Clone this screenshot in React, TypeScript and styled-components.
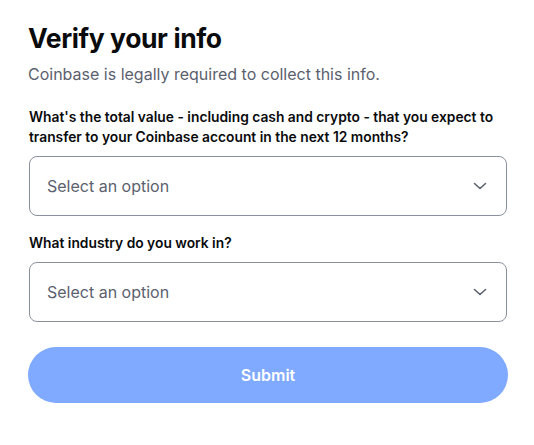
import React from "react";
import styled, { createGlobalStyle } from "styled-components";

const Global = createGlobalStyle`
  html, body { margin: 0; padding: 0; background: #ffffff; }
  body { font-family: Inter, "Noto Sans", sans-serif; color: #0a0b0d; }
  * { box-sizing: border-box; }
`;

const Page = styled.main`
  width: 534px;
  padding: 22px 27px 0 29px;
  display: flex;
  flex-direction: column;
`;

const Title = styled.h1`
  margin: 0 0 0 -1px;
  font-size: 26.5px;
  line-height: 32px;
  font-weight: 700;
  letter-spacing: -0.4px;
`;

const Subtitle = styled.p`
  margin: 8px 0 0 -1px;
  font-size: 16px;
  line-height: 24px;
  color: #5b616e;
`;

const Field = styled.div`
  display: flex;
  flex-direction: column;
  margin-top: ${(p: { $top: number }) => p.$top}px;
`;

const Label = styled.label`
  font-size: 13.8px;
  line-height: 20px;
  font-weight: 600;
  margin-bottom: 9px;
`;

const SelectBox = styled.div`
  height: 60px;
  border: 1px solid #8a919e;
  border-radius: 8px;
  display: flex;
  align-items: center;
  justify-content: space-between;
  padding: 0 19px 0 17px;
`;

const Placeholder = styled.span`
  font-size: 16px;
  color: #5b616e;
`;

const Chevron = () => (
  <svg width="14" height="14" viewBox="0 0 14 14" fill="none">
    <path d="M1.5 4.5 L7 9.5 L12.5 4.5" stroke="#5b616e" strokeWidth="1.6" strokeLinecap="round" strokeLinejoin="round" />
  </svg>
);

const Button = styled.button`
  margin-top: 25px;
  height: 56px;
  width: 480px;
  margin-left: -1px;
  border: none;
  border-radius: 28px;
  background: #7faaff;
  color: #ffffff;
  font-family: Inter, "Noto Sans", sans-serif;
  font-size: 16px;
  font-weight: 600;
`;

export default function App() {
  return (
    <>
      <Global />
      <Page>
        <Title>Verify your info</Title>
        <Subtitle>Coinbase is legally required to collect this info.</Subtitle>
        <Field $top={21}>
          <Label>
            What's the total value - including cash and crypto - that you expect to transfer to your Coinbase account in the next 12 months?
          </Label>
          <SelectBox>
            <Placeholder>Select an option</Placeholder>
            <Chevron />
          </SelectBox>
        </Field>
        <Field $top={17}>
          <Label>What industry do you work in?</Label>
          <SelectBox>
            <Placeholder>Select an option</Placeholder>
            <Chevron />
          </SelectBox>
        </Field>
        <Button>Submit</Button>
      </Page>
    </>
  );
}
